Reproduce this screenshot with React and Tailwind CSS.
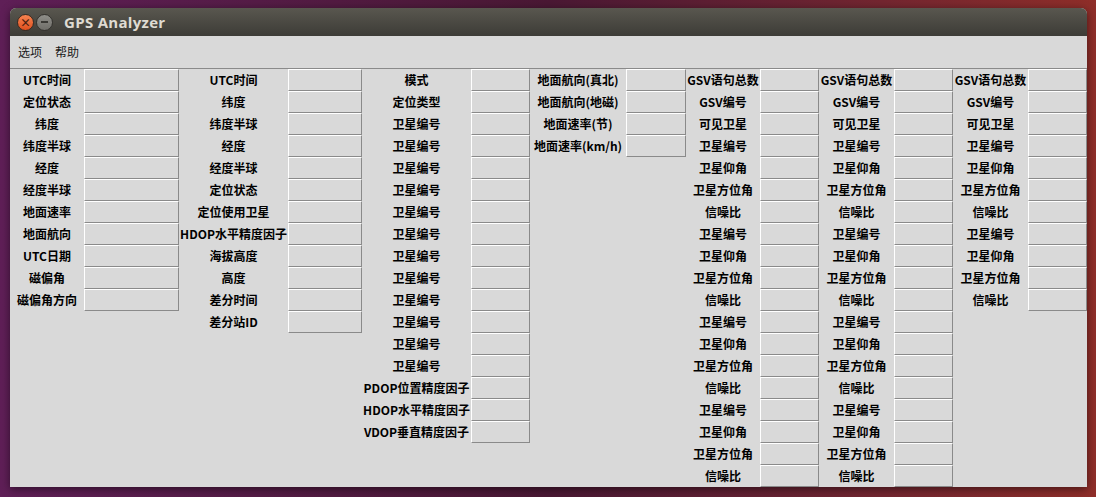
import React from "react";

const gsv = ["GSV语句总数", "GSV编号", "可见卫星"];
const sat = ["卫星编号", "卫星仰角", "卫星方位角", "信噪比"];

const columns = [
  {
    label: "w-[74px]",
    field: "w-[95px]",
    rows: ["UTC时间", "定位状态", "纬度", "纬度半球", "经度", "经度半球", "地面速率", "地面航向", "UTC日期", "磁偏角", "磁偏角方向"],
  },
  {
    label: "w-[109px]",
    field: "w-[74px]",
    rows: ["UTC时间", "纬度", "纬度半球", "经度", "经度半球", "定位状态", "定位使用卫星", "HDOP水平精度因子", "海拔高度", "高度", "差分时间", "差分站ID"],
  },
  {
    label: "w-[109px]",
    field: "w-[59px]",
    rows: [
      "模式",
      "定位类型",
      ...Array(12).fill("卫星编号"),
      "PDOP位置精度因子",
      "HDOP水平精度因子",
      "VDOP垂直精度因子",
    ],
  },
  {
    label: "w-[96px]",
    field: "w-[60px]",
    rows: ["地面航向(真北)", "地面航向(地磁)", "地面速率(节)", "地面速率(km/h)"],
  },
  { label: "w-[74px]", field: "w-[59px]", rows: [...gsv, ...sat, ...sat, ...sat, ...sat] },
  { label: "w-[75px]", field: "w-[59px]", rows: [...gsv, ...sat, ...sat, ...sat, ...sat] },
  { label: "w-[75px]", field: "w-[59px]", rows: [...gsv, ...sat, ...sat] },
];

function Column({ col }) {
  return (
    <div className="flex flex-col">
      {col.rows.map((name, i) => (
        <div key={i} className="flex h-[22px]">
          <div className={`${col.label} flex items-center justify-center whitespace-nowrap text-[12px] font-bold text-black`}>
            {name}
          </div>
          <div className={`${col.field} h-[22px] border-t border-l border-white border-r border-b border-r-[#8a8a8a] border-b-[#8a8a8a] bg-[#d9d9d9]`} />
        </div>
      ))}
    </div>
  );
}

export default function App() {
  return (
    <div
      className="w-[1096px] h-[497px] overflow-hidden pt-[8px] pl-[10px] bg-gradient-to-r from-[#5f1f57] via-[#4a1834] to-[#8f2e29]"
      style={{ fontFamily: '"Noto Sans CJK SC", "Noto Sans", sans-serif' }}
    >
      <div className="w-[1077px] h-[479px] flex flex-col rounded-t-[6px] overflow-hidden bg-[#d9d9d9] shadow-[0_2px_8px_rgba(0,0,0,0.5)]">
        {/* title bar */}
        <div className="h-[28px] flex items-center pl-[7px] bg-gradient-to-b from-[#59574f] to-[#3d3c37]">
          <div className="w-[17px] h-[17px] rounded-full flex items-center justify-center bg-gradient-to-b from-[#f58350] to-[#df4f1c] border border-[#3a2a22] text-[#4a2010] text-[11px] leading-none font-bold">
            ×
          </div>
          <div className="ml-[2px] w-[17px] h-[17px] rounded-full flex items-center justify-center bg-gradient-to-b from-[#8f8e89] to-[#6f6e69] border border-[#34332f]">
            <div className="w-[7px] h-[2px] bg-[#3a3935]" />
          </div>
          <span
            className="ml-[11px] text-[15px] font-bold text-[#dfdbd2] tracking-[0.3px]"
            style={{ fontFamily: '"Open Sans", "Noto Sans", sans-serif' }}
          >
            GPS Analyzer
          </span>
        </div>
        {/* menu bar */}
        <div className="h-[33px] flex items-center gap-[13px] pl-[8px] border-b border-[#8a8a8a] text-[12px] text-[#1a1a1a]">
          <span>选项</span>
          <span>帮助</span>
        </div>
        {/* content */}
        <div className="flex items-start">
          {columns.map((col, i) => (
            <Column key={i} col={col} />
          ))}
        </div>
      </div>
    </div>
  );
}
